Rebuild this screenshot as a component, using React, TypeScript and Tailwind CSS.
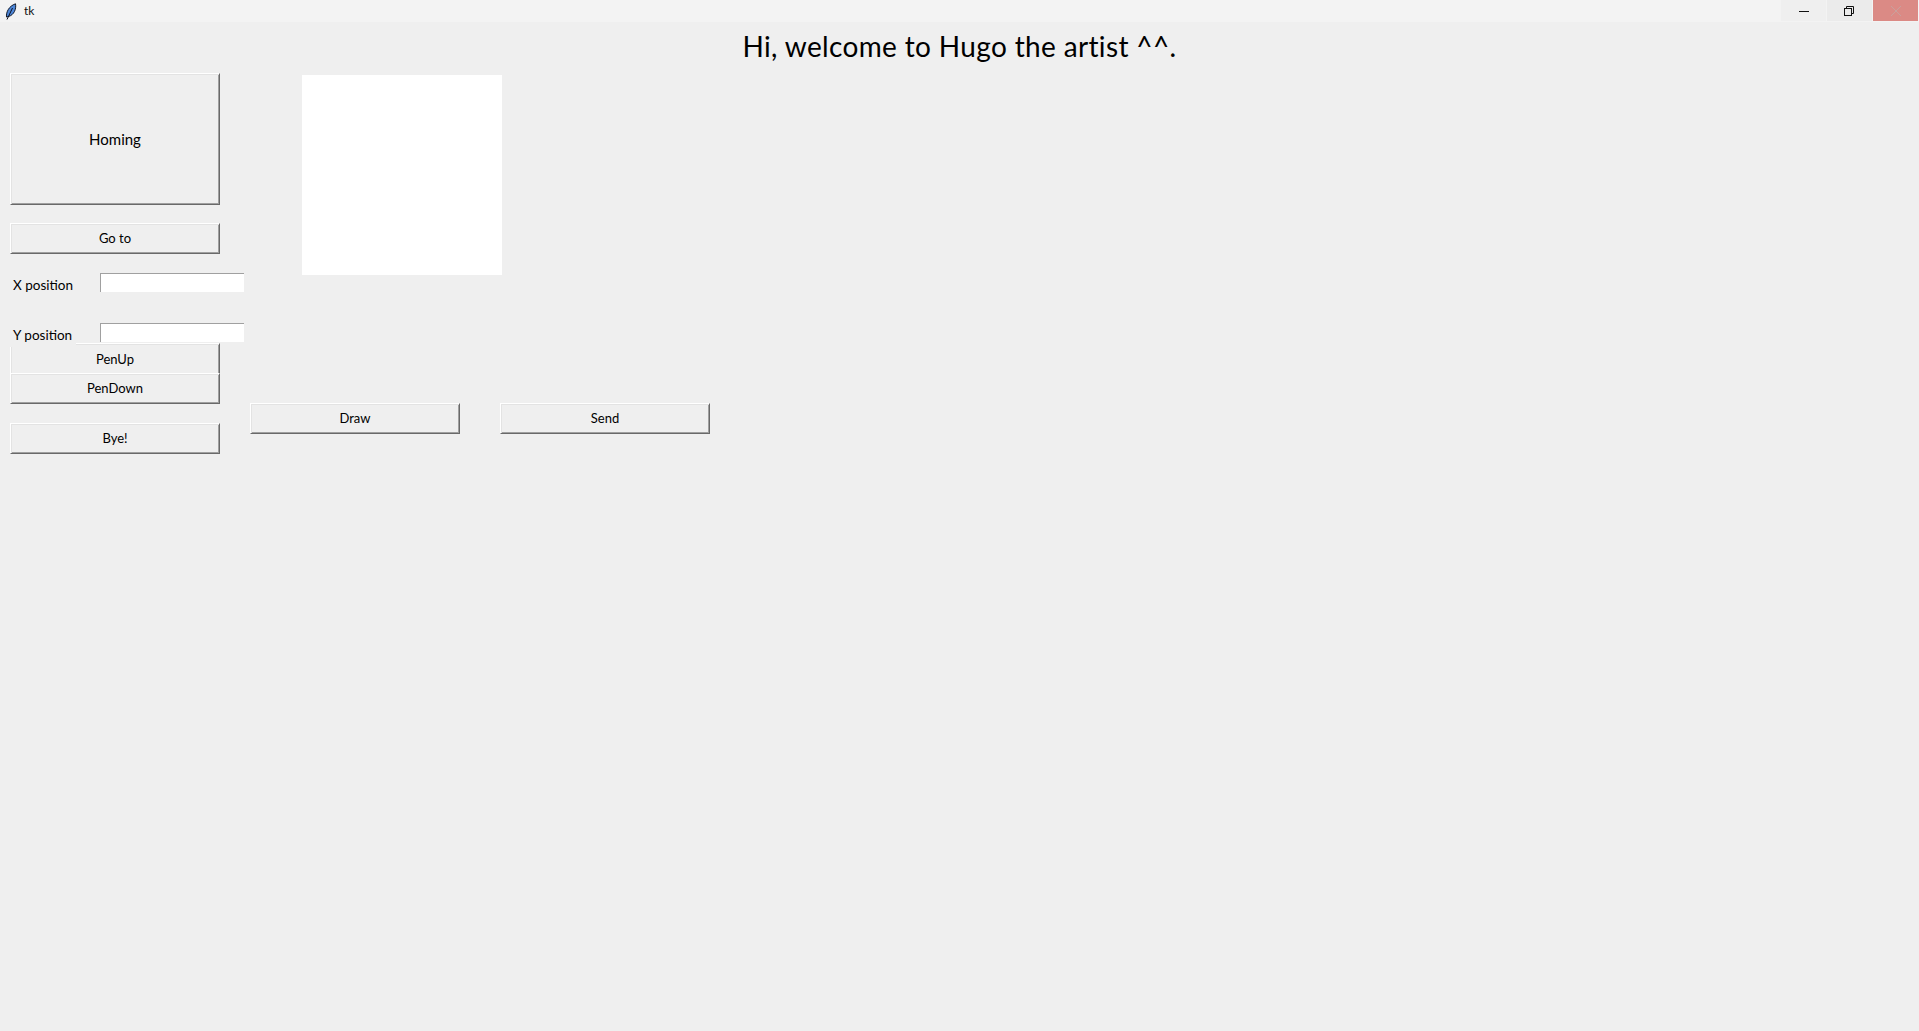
const uiFont = "font-['Comic_Sans_MS','Lato',sans-serif]";

const TkButton = ({ label, className = "" }: { label: string; className?: string }) => (
  <button
    className={`block w-[210px] border border-t-white border-l-white border-r-[#696969] border-b-[#696969] bg-[#efefef] pt-[1px] text-black shadow-[inset_1px_1px_0_#e3e3e3,inset_-1px_-1px_0_#a0a0a0] ${className}`}
  >
    {label}
  </button>
);

const PositionRow = ({ label, className = "" }: { label: string; className?: string }) => (
  <div className={`flex h-[20px] items-start ${className}`}>
    <span className="relative z-10 mr-[24px] h-[24px] w-[66px] shrink-0 bg-[#efefef] pl-[3px] pt-[2px] text-[13.5px] leading-[20px] whitespace-nowrap text-black">
      {label}
    </span>
    <input
      type="text"
      className="h-[19px] w-[144px] border-t border-l border-t-[#a0a0a0] border-l-[#a0a0a0] bg-white outline-none"
    />
  </div>
);

const Feather = () => (
  <svg width="12" height="17" viewBox="0 0 12 17" className="ml-[5px]">
    <path d="M1.5 14 C1 9 4 3 10.5 0.8 C11.5 6 9 12 3.5 13.5 Z" fill="#4d86d8" stroke="#101828" strokeWidth="1" />
    <path d="M2 16.5 L7.5 5" stroke="#0b1020" strokeWidth="1" fill="none" />
  </svg>
);

export default function App() {
  return (
    <div className={`flex h-[1031px] w-[1919px] flex-col overflow-hidden bg-[#efefef] ${uiFont}`}>
      <div className="flex h-[22px] items-start bg-[#f3f3f3]">
        <div className="flex h-[22px] items-center">
          <Feather />
          <span className="ml-[7px] text-[12px] text-[#111]">tk</span>
        </div>
        <div className="ml-auto flex h-[21px] gap-[1px] pr-[1px]">
          <div className="flex w-[45px] items-center justify-center bg-[#efefef]">
            <svg width="10" height="10" viewBox="0 0 10 10">
              <path d="M0 5.5 H10" stroke="#111" strokeWidth="1" />
            </svg>
          </div>
          <div className="flex w-[45px] items-center justify-center bg-[#ebebeb] pr-[2px]">
            <svg width="10" height="10" viewBox="0 0 10 10" fill="none">
              <rect x="0.5" y="2.5" width="7" height="7" stroke="#111" strokeWidth="1" />
              <path d="M2.5 2.5 V0.5 H9.5 V7.5 H7.5" stroke="#111" strokeWidth="1" />
            </svg>
          </div>
          <div className="flex w-[45px] items-center justify-center bg-[#db8a85]">
            <svg width="10" height="10" viewBox="0 0 10 10">
              <path d="M0 0 L10 10 M10 0 L0 10" stroke="#c9a09c" strokeWidth="1" />
            </svg>
          </div>
        </div>
      </div>

      <h1 className="h-[51px] pt-[8px] text-center text-[28px] leading-[32px] font-normal tracking-[0.35px] text-black">
        Hi, welcome to Hugo the artist ^^.
      </h1>

      <div className="flex">
        <div className="ml-[10px] w-[234px]">
          <TkButton label="Homing" className="h-[132px] text-[15px]" />
          <TkButton label="Go to" className="mt-[18px] h-[31px] text-[13px]" />
          <PositionRow label="X position" className="mt-[19px]" />
          <PositionRow label="Y position" className="mt-[30px]" />
          {/* PenDown sits on top of PenUp's bottom edge, as in the original window */}
          <TkButton label="PenUp" className="h-[32px] text-[13px]" />
          <TkButton label="PenDown" className="relative -mt-[2px] h-[31px] text-[13px]" />
          <TkButton label="Bye!" className="mt-[19px] h-[31px] text-[13px]" />
        </div>

        <div className="ml-[6px] flex flex-col">
          <div className="mt-[2px] ml-[52px] h-[200px] w-[200px] bg-white" />
          <div className="mt-[128px] flex gap-[40px]">
            <TkButton label="Draw" className="h-[31px] text-[13px]" />
            <TkButton label="Send" className="h-[31px] text-[13px]" />
          </div>
        </div>
      </div>
    </div>
  );
}
